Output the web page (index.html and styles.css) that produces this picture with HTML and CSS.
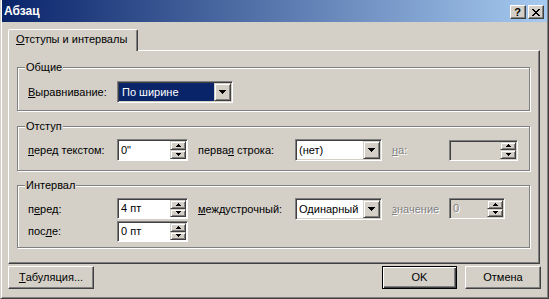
FILE: index.html
```html
<!DOCTYPE html>
<html lang="ru">
<head>
<meta charset="utf-8">
<title>Абзац</title>
<link rel="stylesheet" href="styles.css">
</head>
<body>
<div class="window">
  <div class="titlebar">
    <span class="title">Абзац</span>
    <div class="cap-btns">
      <span class="cap-btn help">?</span>
      <span class="cap-btn close"><svg width="8" height="7" viewBox="0 0 8 7"><path d="M0 0h2v1h1v1h2V1h1V0h2v1H7v1H6v1H5v1h1v1h1v1h1v1H6V6H5V5H3v1H2v1H0V6h1V5h1V4h1V3H2V2H1V1H0z"/></svg></span>
    </div>
  </div>
  <div class="content">
    <div class="tabs">
      <div class="tab"><u>О</u>тступы и интервалы</div>
    </div>
    <div class="panel">
      <div class="group g1">
        <span class="legend">Общие</span>
        <div class="row-simple">
          <span class="lbl first"><u>В</u>ыравнивание:</span>
          <div class="combo sel wide">
            <span class="cval">По ширине</span>
            <span class="dd"><svg width="7" height="4" viewBox="0 0 7 4"><path d="M0 0h7v1H6v1H5v1H4v1H3V3H2V2H1V1H0z"/></svg></span>
          </div>
        </div>
      </div>
      <div class="group g2">
        <span class="legend">Отступ</span>
        <div class="row">
          <span class="lbl"><u>п</u>еред текстом:</span>
          <div class="spin">
            <span class="val">0"</span>
            <div class="arrows">
              <span class="sb"><svg width="5" height="3" viewBox="0 0 5 3"><path d="M2 0h1v1h1v1h1v1H0V2h1V1h1z"/></svg></span>
              <span class="sb"><svg width="5" height="3" viewBox="0 0 5 3"><path d="M0 0h5v1H4v1H3v1H2V2H1V1H0z"/></svg></span>
            </div>
          </div>
          <span class="lbl mid">перва<u>я</u> строка:</span>
          <div class="combo">
            <span class="cval">(нет)</span>
            <span class="dd"><svg width="7" height="4" viewBox="0 0 7 4"><path d="M0 0h7v1H6v1H5v1H4v1H3V3H2V2H1V1H0z"/></svg></span>
          </div>
          <span class="lbl mid disabled"><u>н</u>а:</span>
          <div class="spin disabled w69">
            <span class="val"></span>
            <div class="arrows">
              <span class="sb"><svg width="5" height="3" viewBox="0 0 5 3"><path d="M2 0h1v1h1v1h1v1H0V2h1V1h1z"/></svg></span>
              <span class="sb"><svg width="5" height="3" viewBox="0 0 5 3"><path d="M0 0h5v1H4v1H3v1H2V2H1V1H0z"/></svg></span>
            </div>
          </div>
        </div>
      </div>
      <div class="group g3">
        <span class="legend">Интервал</span>
        <div class="row">
          <span class="lbl">п<u>е</u>ред:</span>
          <div class="spin short">
            <span class="val">4 пт</span>
            <div class="arrows">
              <span class="sb"><svg width="5" height="3" viewBox="0 0 5 3"><path d="M2 0h1v1h1v1h1v1H0V2h1V1h1z"/></svg></span>
              <span class="sb"><svg width="5" height="3" viewBox="0 0 5 3"><path d="M0 0h5v1H4v1H3v1H2V2H1V1H0z"/></svg></span>
            </div>
          </div>
          <span class="lbl mid"><u>м</u>еждустрочный:</span>
          <div class="combo">
            <span class="cval">Одинарный</span>
            <span class="dd"><svg width="7" height="4" viewBox="0 0 7 4"><path d="M0 0h7v1H6v1H5v1H4v1H3V3H2V2H1V1H0z"/></svg></span>
          </div>
          <span class="lbl mid disabled"><u>з</u>начение</span>
          <div class="spin disabled short w56">
            <span class="val">0</span>
            <div class="arrows">
              <span class="sb"><svg width="5" height="3" viewBox="0 0 5 3"><path d="M2 0h1v1h1v1h1v1H0V2h1V1h1z"/></svg></span>
              <span class="sb"><svg width="5" height="3" viewBox="0 0 5 3"><path d="M0 0h5v1H4v1H3v1H2V2H1V1H0z"/></svg></span>
            </div>
          </div>
          <span class="lbl">пос<u>л</u>е:</span>
          <div class="spin short">
            <span class="val">0 пт</span>
            <div class="arrows">
              <span class="sb"><svg width="5" height="3" viewBox="0 0 5 3"><path d="M2 0h1v1h1v1h1v1H0V2h1V1h1z"/></svg></span>
              <span class="sb"><svg width="5" height="3" viewBox="0 0 5 3"><path d="M0 0h5v1H4v1H3v1H2V2H1V1H0z"/></svg></span>
            </div>
          </div>
        </div>
      </div>
    </div>
    <div class="actions">
      <span class="btn tabs-btn"><u>Т</u>абуляция...</span>
      <span class="btn ok">OK</span>
      <span class="btn cancel">Отмена</span>
    </div>
  </div>
</div>
</body>
</html>
```
FILE: styles.css
```css
* { box-sizing: border-box; }
html, body { margin: 0; padding: 0; }
body {
  width: 549px;
  height: 299px;
  overflow: hidden;
  background: #d4d0c8;
  font-family: "Liberation Sans", Arial, sans-serif;
  font-size: 11px;
  line-height: 13px;
  color: #000;
}
.window {
  width: 549px;
  height: 299px;
  background: #d4d0c8;
  border-left: 1px solid #d4d0c8;
  border-right: 1px solid #404040;
  border-bottom: 1px solid #404040;
  box-shadow: inset 1px 0 0 #fff, inset -1px -1px 0 #808080;
  padding: 0 1px 1px 1px;
  display: flex;
  flex-direction: column;
}
.titlebar {
  height: 22px;
  flex: none;
  background: linear-gradient(to right, #0a246a, #a6caf0);
  display: flex;
  align-items: center;
  padding: 0 3px 0 2px;
}
.title {
  flex: 1;
  color: #fff;
  font-weight: bold;
  font-size: 12px;
}
.cap-btns {
  display: flex;
  gap: 2px;
  align-self: flex-start;
  margin-top: 5px;
}
.cap-btn {
  width: 16px;
  height: 14px;
  background: #d4d0c8;
  border: 1px solid;
  border-color: #fff #404040 #404040 #fff;
  box-shadow: inset -1px -1px 0 #808080;
  display: flex;
  align-items: center;
  justify-content: center;
}
.cap-btn.help {
  font-weight: bold;
  font-size: 11px;
  line-height: 11px;
  padding-right: 1px;
}
.cap-btn svg { display: block; margin-right: 1px; }
.content {
  flex: 1;
  display: flex;
  flex-direction: column;
  padding: 7px 5px 0 6px;
}
.tabs {
  height: 21px;
  display: flex;
  position: relative;
  z-index: 1;
}
.tab {
  width: 130px;
  height: 22px;
  background: #d4d0c8;
  border: 1px solid;
  border-bottom: none;
  border-color: #fff #404040 transparent #fff;
  border-radius: 2px 2px 0 0;
  box-shadow: inset -1px 0 0 #808080;
  padding: 3px 0 0 7px;
  white-space: nowrap;
}
.panel {
  width: 532px;
  height: 214px;
  border: 1px solid;
  border-color: #fff #404040 #404040 #fff;
  box-shadow: inset -1px -1px 0 #808080;
  padding: 16px 0 0 8px;
}
.group {
  position: relative;
  width: 513px;
  border: 1px solid #808080;
  box-shadow: inset 1px 1px 0 #fff, 1px 1px 0 #fff;
  padding: 12px 0 0 10px;
}
.g1 { height: 44px; padding-top: 13px; }
.g2 { height: 45px; margin-top: 15px; }
.g3 { height: 63px; margin-top: 14px; }
.legend {
  position: absolute;
  top: -7px;
  left: 7px;
  padding: 0 1px;
  background: #d4d0c8;
  white-space: nowrap;
}
.row-simple {
  display: flex;
  align-items: center;
}
.row-simple .lbl { width: 89px; }
.row {
  display: grid;
  grid-template-columns: 89px 71px 107px 87px 67px auto;
  row-gap: 1px;
  align-items: center;
}
.lbl { white-space: nowrap; }
.lbl.mid { padding-left: 10px; }
.lbl.disabled, .disabled .val {
  color: #808080;
  text-shadow: 1px 1px 0 #fff;
}
.spin {
  height: 22px;
  background: #fff;
  border: 1px solid;
  border-color: #808080 #fff #fff #808080;
  box-shadow: inset 1px 1px 0 #404040;
  padding: 1px;
  display: flex;
}
.spin.short { height: 21px; align-self: start; }
.spin.disabled { background: #d4d0c8; }
.spin.w69 { width: 69px; height: 21px; }
.spin.w56 { width: 56px; }
.val {
  flex: 1;
  padding-left: 2px;
  display: flex;
  align-items: center;
  white-space: nowrap;
}
.arrows {
  width: 16px;
  display: flex;
  flex-direction: column;
}
.sb {
  flex: 1;
  background: #d4d0c8;
  border: 1px solid;
  border-color: #d4d0c8 #404040 #404040 #d4d0c8;
  box-shadow: inset 1px 1px 0 #fff, inset -1px -1px 0 #808080;
  display: flex;
  align-items: center;
  justify-content: center;
}
.sb svg { display: block; }
.combo {
  height: 22px;
  background: #fff;
  border: 1px solid;
  border-color: #808080 #fff #fff #808080;
  box-shadow: inset 1px 1px 0 #404040, inset -1px -1px 0 #d4d0c8;
  padding: 1px;
  display: flex;
  align-self: start;
}
.combo.wide { width: 116px; }
.cval {
  flex: 1;
  padding-left: 2px;
  display: flex;
  align-items: center;
  white-space: nowrap;
}
.combo.sel .cval {
  background: #0a246a;
  color: #fff;
  padding-left: 3px;
}
.dd {
  width: 17px;
  background: #d4d0c8;
  border: 1px solid;
  border-color: #d4d0c8 #404040 #404040 #d4d0c8;
  box-shadow: inset 1px 1px 0 #fff, inset -1px -1px 0 #808080;
  display: flex;
  align-items: center;
  justify-content: center;
}
.dd svg { display: block; }
.actions {
  display: flex;
  margin-top: 2px;
  padding-right: 1px;
}
.btn {
  height: 23px;
  background: #d4d0c8;
  border: 1px solid;
  border-color: #fff #404040 #404040 #fff;
  box-shadow: inset -1px -1px 0 #808080;
  display: flex;
  align-items: center;
  justify-content: center;
  white-space: nowrap;
}
.tabs-btn { width: 86px; }
.ok {
  width: 75px;
  margin-left: auto;
  border-color: #000;
  box-shadow: inset 1px 1px 0 #fff, inset -1px -1px 0 #404040, inset -2px -2px 0 #808080;
}
.cancel { width: 76px; margin-left: 8px; }
```
